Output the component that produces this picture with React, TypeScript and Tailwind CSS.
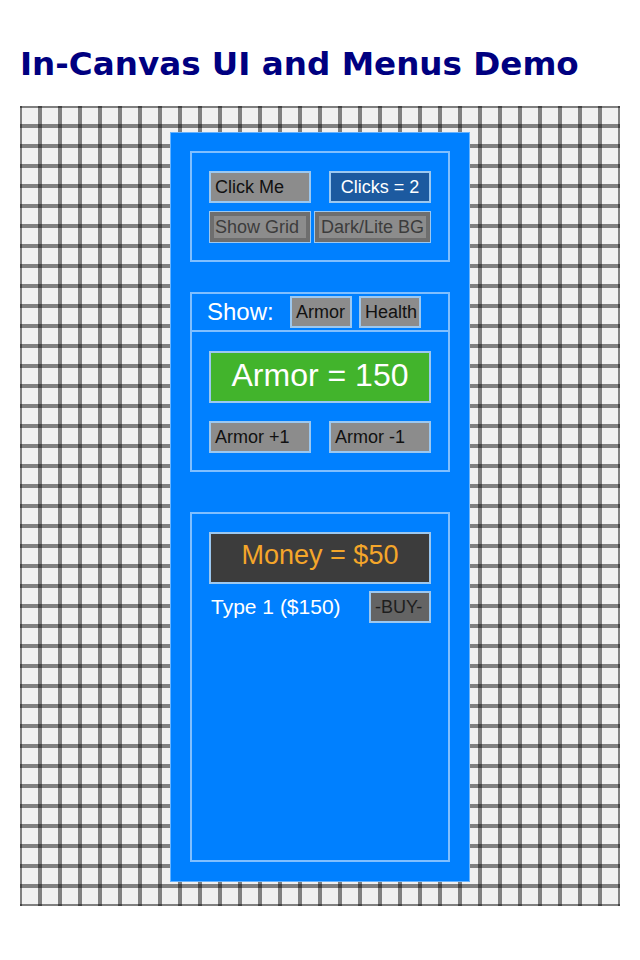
const xs = Array.from({ length: 31 }, (_, i) => i * 20 - 2);
const ys = Array.from({ length: 41 }, (_, i) => i * 20 - 2);

function GridLines() {
  return (
    <svg className="absolute inset-0" width="600" height="800" viewBox="0 0 600 800" shapeRendering="crispEdges">
      {xs.map((x) => (
        <rect key={'v' + x} x={x} y={0} width={4} height={800} fill="rgba(0,0,0,0.47)" />
      ))}
      {ys.map((y) => (
        <rect key={'h' + y} x={0} y={y} width={600} height={4} fill="rgba(0,0,0,0.47)" />
      ))}
    </svg>
  );
}

const btn = 'h-[32px] border-2 border-[#9cc8f0] bg-[#8c8c8c] text-[18px] text-[#111] flex items-center pl-[4px] leading-none';

export default function App() {
  return (
    <div className="min-h-[960px] bg-white pl-[20px] font-['Liberation_Sans',Arial,sans-serif]">
      <h1 className="pt-[48px] text-[32.6px] leading-none font-bold text-[#000080] font-['DejaVu_Sans',Verdana,sans-serif]">
        In-Canvas UI and Menus Demo
      </h1>

      {/* canvas */}
      <div className="relative mt-[25px] w-[600px] h-[800px] bg-[#f0f0f0] overflow-hidden">
        <GridLines />
        <div className="relative ml-[150px] mt-[26px] w-[300px] h-[750px] bg-[#0080ff] border border-[#66b3ff] px-[19px] pt-[18px] flex flex-col">
          {/* buttons box */}
          <div className="w-[260px] border-2 border-[#80bfff] pt-[18px] pb-[17px] pl-[17px] flex flex-col gap-[8px]">
            <div className="flex gap-[18px]">
              <div className={`${btn} w-[102px]`}>Click Me</div>
              <div className="w-[102px] h-[32px] border-2 border-[#9cc8f0] bg-[#1c5aa0] text-[18px] text-white flex items-center justify-center leading-none">
                Clicks = 2
              </div>
            </div>
            <div className="flex gap-[3px]">
              <div className="w-[102px] h-[32px] border border-[#9cc8f0] bg-[#6e6e6e] p-[4px]">
                <div className="h-full bg-[#8c8c8c] text-[18px] text-[#3c3c3c] flex items-center leading-none pl-[1px]">Show Grid</div>
              </div>
              <div className="w-[117px] h-[32px] border border-[#9cc8f0] bg-[#6e6e6e] p-[4px]">
                <div className="h-full bg-[#8c8c8c] text-[18px] text-[#3c3c3c] flex items-center leading-none pl-[2px]">Dark/Lite BG</div>
              </div>
            </div>
          </div>

          {/* armor box */}
          <div className="mt-[30px] w-[260px] border-2 border-[#80bfff] flex flex-col">
            <div className="h-[38px] border-b-2 border-[#80bfff] flex items-center pl-[15px]">
              <span className="w-[83px] text-[24px] text-white leading-none">Show:</span>
              <div className={`${btn} w-[62px]`}>Armor</div>
              <div className={`${btn} w-[62px] ml-[7px]`}>Health</div>
            </div>
            <div className="pt-[19px] pb-[17px] pl-[17px] flex flex-col">
              <div className="w-[222px] h-[52px] border-2 border-[#9cc8f0] bg-[#42b42c] text-[32px] text-white flex items-center justify-center leading-none pb-[4px]">
                Armor = 150
              </div>
              <div className="mt-[18px] flex gap-[18px]">
                <div className={`${btn} w-[102px]`}>Armor +1</div>
                <div className={`${btn} w-[102px]`}>Armor -1</div>
              </div>
            </div>
          </div>

          {/* shop box */}
          <div className="mt-[40px] w-[260px] h-[350px] border-2 border-[#80bfff] pt-[18px] pl-[17px] flex flex-col">
            <div className="w-[222px] h-[52px] border-2 border-[#9cc8f0] bg-[#3c3c3c] text-[27px] text-[#f4a62a] flex items-center justify-center leading-none pb-[5px]">
              Money = $50
            </div>
            <div className="mt-[7px] w-[222px] flex items-center justify-between">
              <span className="pl-[2px] text-[21px] text-white leading-none">Type 1 ($150)</span>
              <div className="w-[62px] h-[32px] border-2 border-[#9cc8f0] bg-[#646464] text-[18px] text-[#1e1e1e] flex items-center pl-[4px] leading-none">
                -BUY-
              </div>
            </div>
          </div>
        </div>
      </div>
    </div>
  );
}
